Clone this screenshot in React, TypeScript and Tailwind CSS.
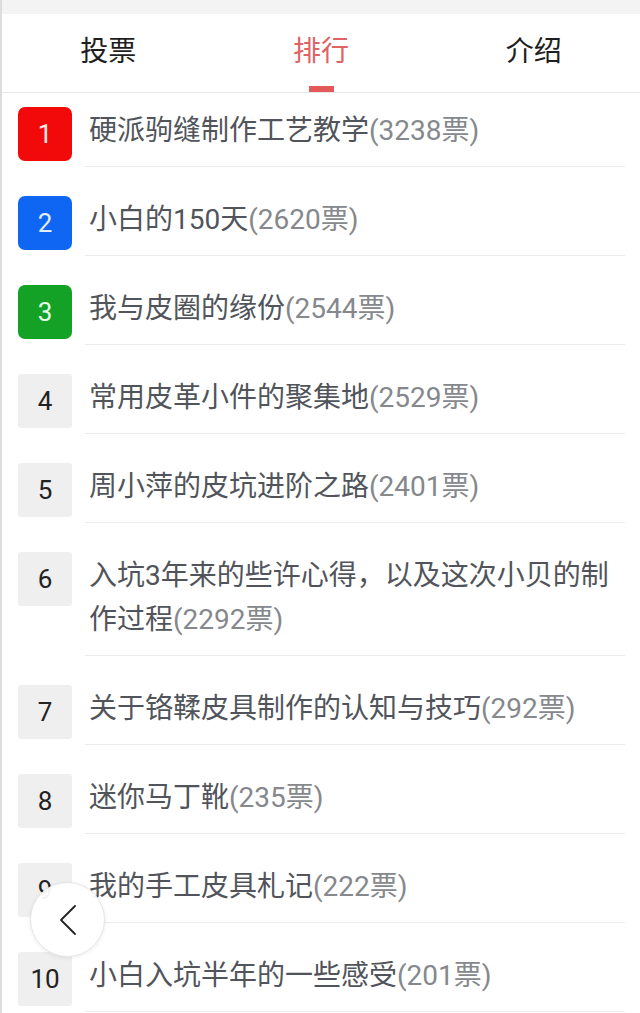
import { useState } from 'react'

const tabs = ['投票', '排行', '介绍']

const ranks = [
  { title: '硬派驹缝制作工艺教学', votes: 3238 },
  { title: '小白的150天', votes: 2620 },
  { title: '我与皮圈的缘份', votes: 2544 },
  { title: '常用皮革小件的聚集地', votes: 2529 },
  { title: '周小萍的皮坑进阶之路', votes: 2401 },
  { title: '入坑3年来的些许心得，以及这次小贝的制作过程', votes: 2292 },
  { title: '关于铬鞣皮具制作的认知与技巧', votes: 292 },
  { title: '迷你马丁靴', votes: 235 },
  { title: '我的手工皮具札记', votes: 222 },
  { title: '小白入坑半年的一些感受', votes: 201 },
]

const badgeColors = [
  'bg-[#f20a0a] text-[#ffe9e9] rounded-[7px]',
  'bg-[#0f66f2] text-[#e3eeff] rounded-[7px]',
  'bg-[#13a126] text-[#e6ffe9] rounded-[7px]',
]

export default function App() {
  const [active, setActive] = useState(1)

  return (
    <div className="relative w-[640px] h-[1013px] overflow-hidden bg-white border-l-2 border-[#dcdcdc] font-['Roboto','Noto_Sans_CJK_SC',sans-serif]">
      <div className="h-[14px] bg-[#f3f3f3]" />

      <header className="flex h-[79px] border-b border-[#e8e8e8] bg-white">
        {tabs.map((tab, i) => (
          <button
            key={tab}
            onClick={() => setActive(i)}
            className="flex-1 flex flex-col items-center justify-between pt-[20px]"
          >
            <span
              className={`text-[28px] leading-[36px] ${
                active === i ? 'text-[#e06262]' : 'text-[#1e1e1e]'
              }`}
            >
              {tab}
            </span>
            <span className={`w-[25px] h-[6px] ${active === i ? 'bg-[#e35858]' : 'bg-transparent'}`} />
          </button>
        ))}
      </header>

      <ul>
        {ranks.map((item, i) => (
          <li key={item.title} className="flex pl-[16px]">
            <div
              className={`w-[54px] h-[54px] shrink-0 flex items-center justify-center text-[26px] ${
                i === 0 ? 'mt-[14px]' : 'mt-[29px]'
              } ${i < 3 ? badgeColors[i] : 'bg-[#efefef] text-[#222] rounded-[3px]'}`}
            >
              {i + 1}
            </div>
            <p
              className={`flex-1 ml-[13px] mr-[15px] pl-[4px] pb-[13px] border-b border-[#ececec] text-[28px] leading-[44px] text-[#51555b] ${
                i === 0 ? 'pt-[16px]' : 'pt-[31px]'
              }`}
            >
              {item.title}
              <span className="text-[#85888c]">({item.votes}票)</span>
            </p>
          </li>
        ))}
      </ul>

      <button className="absolute left-[28px] top-[882px] w-[75px] h-[75px] rounded-full bg-white/95 border border-[#e4e4e4] shadow-[0_1px_4px_rgba(0,0,0,0.08)] flex items-center justify-center">
        <svg width="20" height="32" viewBox="0 0 20 32" fill="none" stroke="#222" strokeWidth="1.8" strokeLinecap="round" strokeLinejoin="round">
          <path d="M17 2 L3 16 L17 30" />
        </svg>
      </button>
    </div>
  )
}
